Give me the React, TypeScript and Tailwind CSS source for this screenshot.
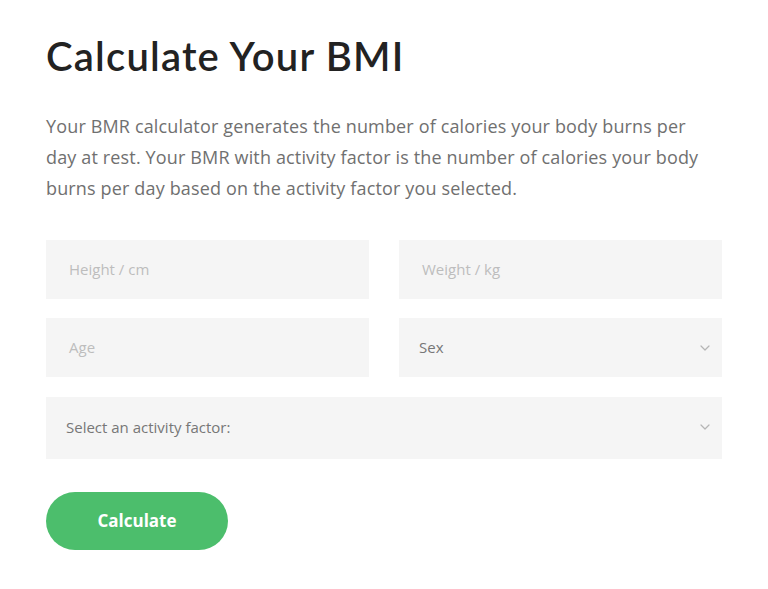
function Chevron() {
  return (
    <svg width="10" height="6" viewBox="0 0 10 6" fill="none" className="shrink-0">
      <path d="M1 1l4 4 4-4" stroke="#b5b5b5" strokeWidth="1.2" strokeLinecap="round" strokeLinejoin="round" />
    </svg>
  )
}

function Field({ label }: { label: string }) {
  return (
    <div className="h-[59px] bg-[#f5f5f5] flex items-center pl-[23px] text-[15px] text-[#bdbdbd]">
      {label}
    </div>
  )
}

function Select({ label, className }: { label: string; className?: string }) {
  return (
    <div className={"bg-[#f5f5f5] flex items-center justify-between pr-[12px] text-[15px] text-[#777] " + className}>
      <span>{label}</span>
      <Chevron />
    </div>
  )
}

export default function App() {
  return (
    <div className="min-h-screen w-full bg-white font-['Open_Sans',sans-serif]">
      <main className="mx-[46px] pt-[30px]">
        <h1 className="font-['Lato',sans-serif] text-[40px] leading-[52px] font-semibold text-[#222] tracking-[1.2px]">
          Calculate Your BMI
        </h1>
        <p className="mt-[29px] pr-[8px] text-[18px] leading-[31px] text-[#707070] tracking-[0.15px]">
          Your BMR calculator generates the number of calories your body burns per day at rest. Your BMR with activity factor is the number of calories your body burns per day based on the activity factor you selected.
        </p>
        <form className="mt-[36px] flex flex-col">
          <div className="grid grid-cols-2 gap-x-[30px] gap-y-[19px]">
            <Field label="Height / cm" />
            <Field label="Weight / kg" />
            <Field label="Age" />
            <Select label="Sex" className="h-[59px] pl-[20px]" />
          </div>
          <Select label="Select an activity factor:" className="mt-[20px] h-[62px] pl-[20px] pb-[2px]" />
          <div className="pt-[33px]">
            <button type="button" className="w-[182px] h-[58px] rounded-full bg-[#4cbe6c] text-white font-bold text-[17px]">
              Calculate
            </button>
          </div>
        </form>
      </main>
    </div>
  )
}
